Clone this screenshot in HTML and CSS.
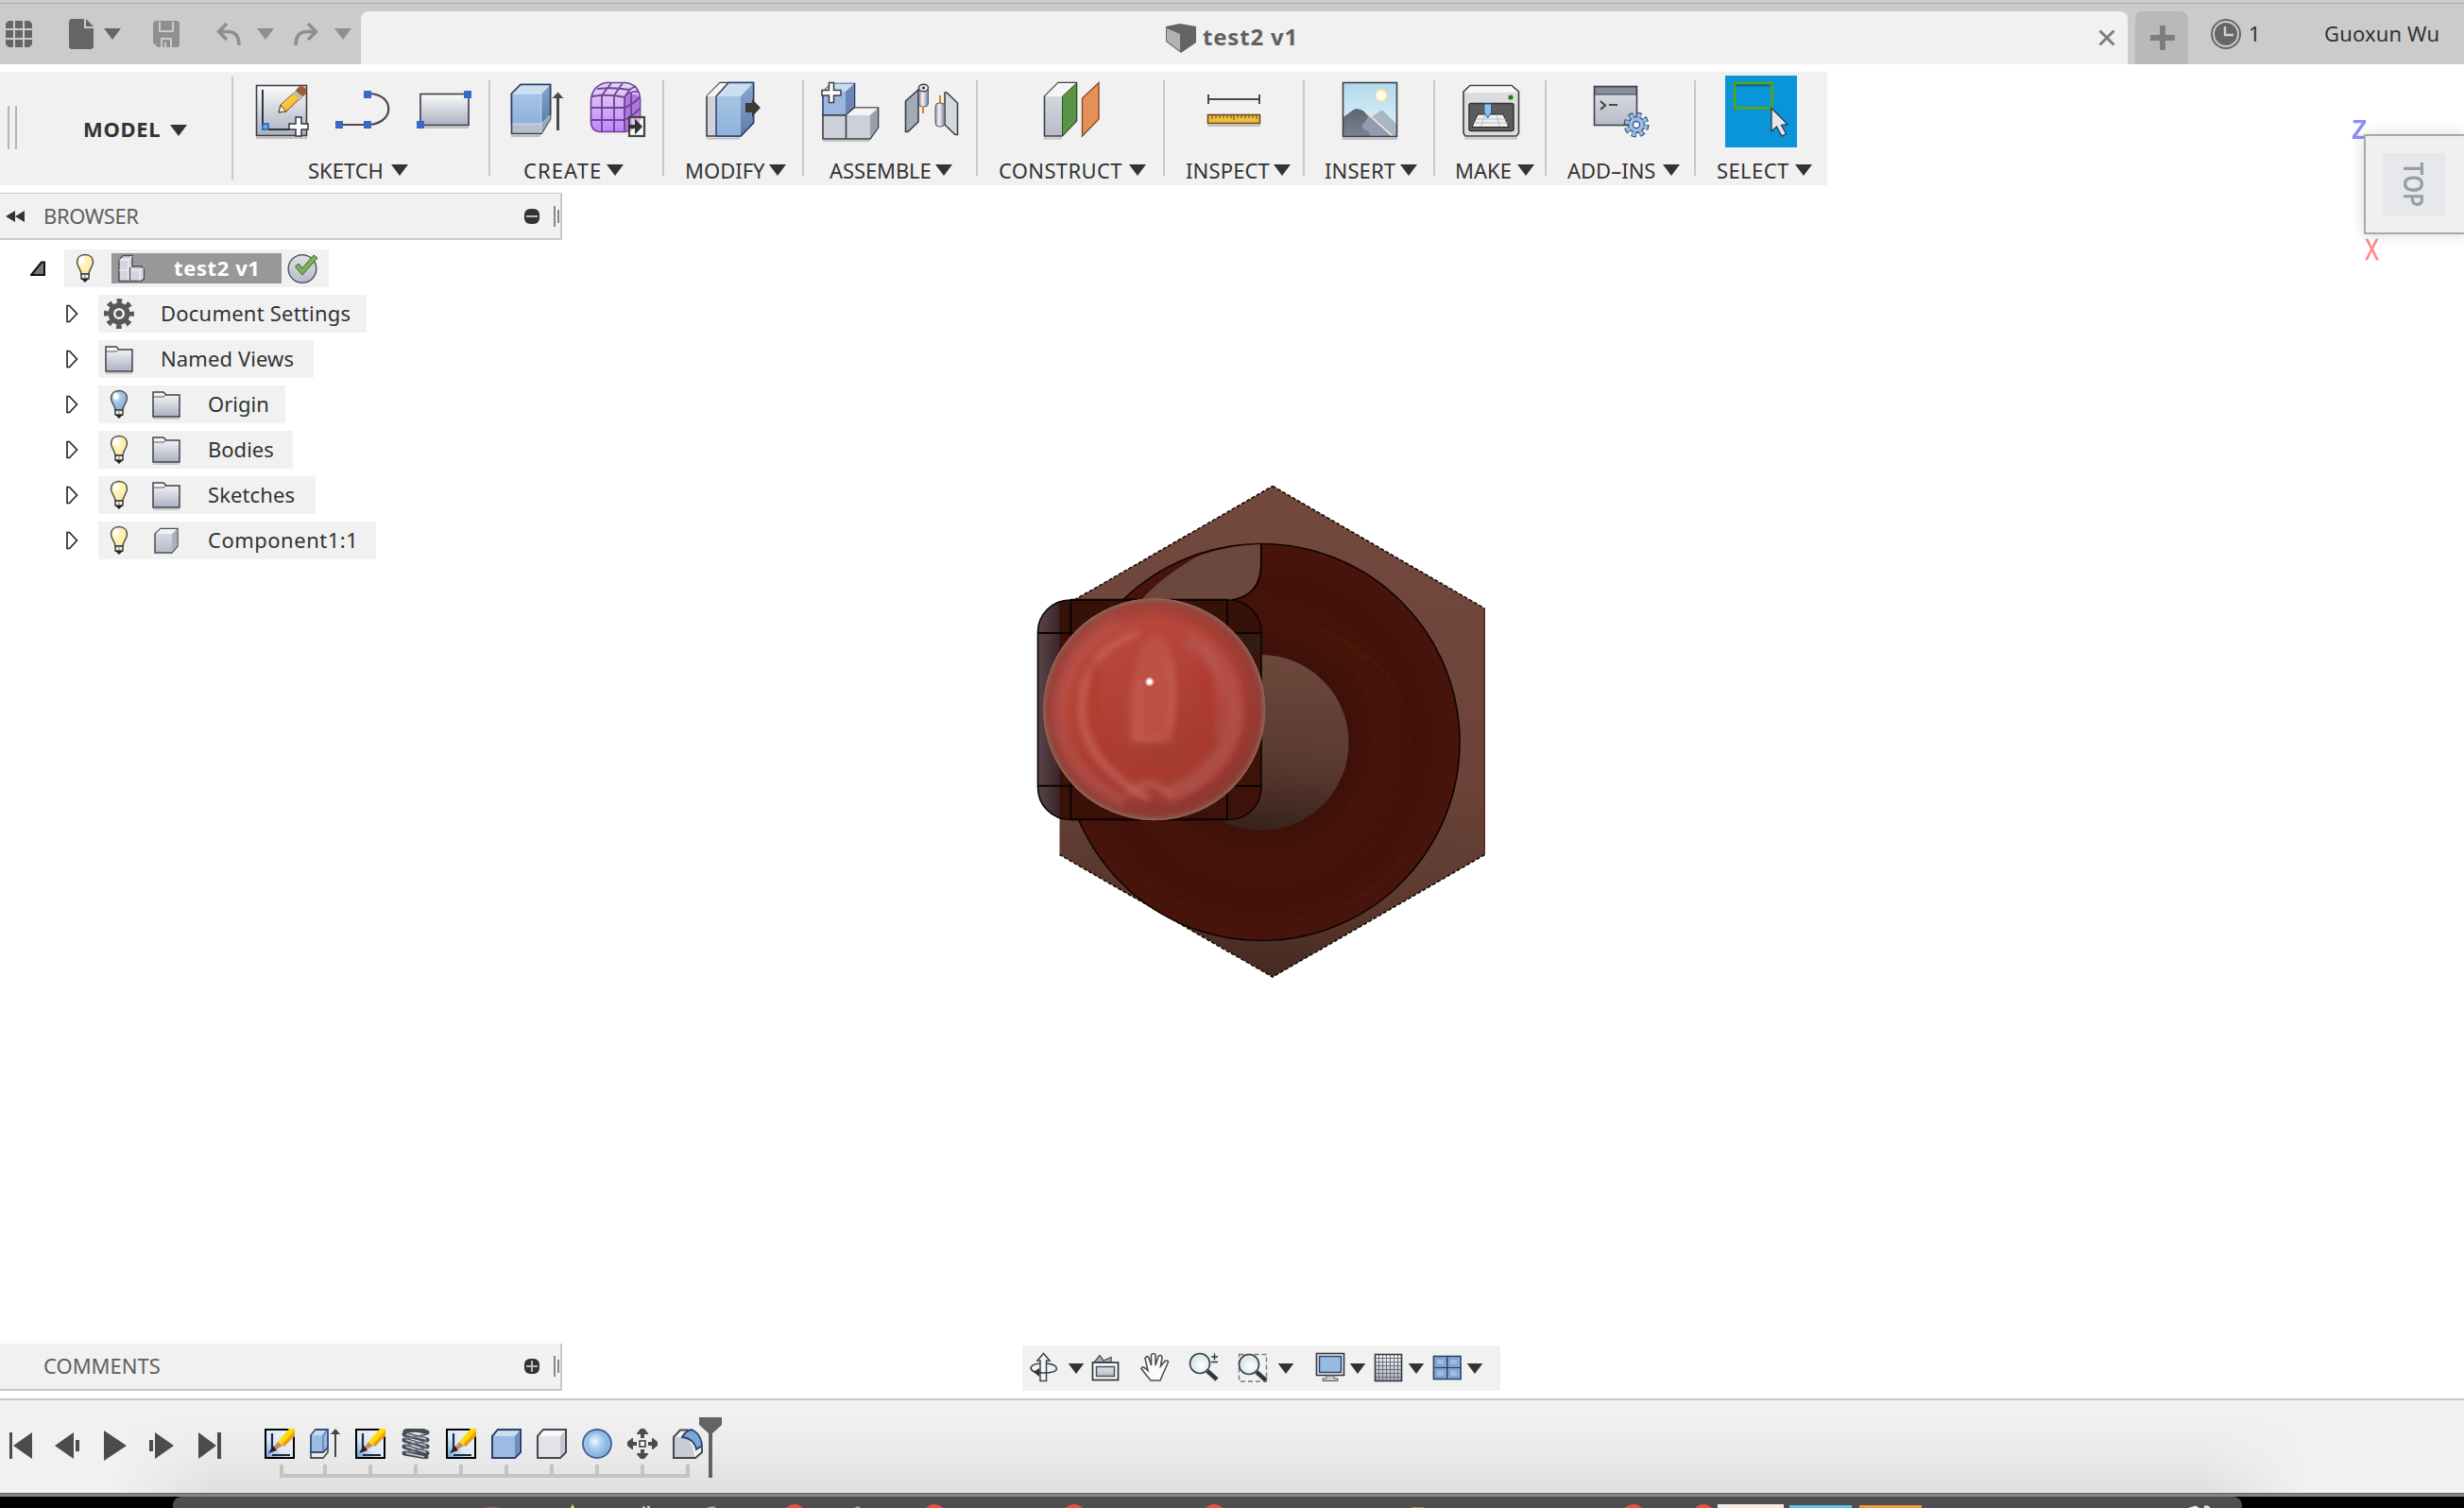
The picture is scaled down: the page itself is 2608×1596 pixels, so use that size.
FILE: index.html
```html
<!DOCTYPE html>
<html lang="en">
<head>
<meta charset="utf-8">
<title>test2 v1</title>
<link rel="stylesheet" href="styles.css">
</head>
<body>
<svg class="defs" width="0" height="0" aria-hidden="true">
  <defs>
    <linearGradient id="steel" x1="0" y1="0" x2="0" y2="1"><stop offset="0" stop-color="#fbfbfc"/><stop offset="1" stop-color="#a9b0c1"/></linearGradient>
    <linearGradient id="steelSoft" x1="0" y1="0" x2="0" y2="1"><stop offset="0" stop-color="#dfe1e4"/><stop offset="1" stop-color="#b7bbc9"/></linearGradient>
    <linearGradient id="blue" x1="0" y1="0" x2="0" y2="1"><stop offset="0" stop-color="#a6c4e4"/><stop offset="1" stop-color="#8eb2dc"/></linearGradient>
    <linearGradient id="blueSide" x1="0" y1="0" x2="0" y2="1"><stop offset="0" stop-color="#88a6cd"/><stop offset="1" stop-color="#5c7cac"/></linearGradient>
    <linearGradient id="purple" x1="0" y1="0" x2="0" y2="1"><stop offset="0" stop-color="#e6d8f2"/><stop offset="1" stop-color="#c184fb"/></linearGradient>
    <linearGradient id="pencilBody" x1="0" y1="0" x2="1" y2="1"><stop offset="0" stop-color="#fff07a"/><stop offset="1" stop-color="#f39a00"/></linearGradient>
    <linearGradient id="paper" x1="1" y1="0" x2="0" y2="1"><stop offset="0" stop-color="#f4f8fd"/><stop offset=".6" stop-color="#dce8f5"/><stop offset="1" stop-color="#5f9fe0"/></linearGradient>
    <linearGradient id="pipe" x1="0" y1="0" x2="1" y2="0"><stop offset="0" stop-color="#8d949f"/><stop offset=".4" stop-color="#f4f5f7"/><stop offset="1" stop-color="#7b828e"/></linearGradient>
    <linearGradient id="sky" x1="0" y1="0" x2="0" y2="1"><stop offset="0" stop-color="#b3d9ec"/><stop offset="1" stop-color="#e3f3fa"/></linearGradient>
    <linearGradient id="hill" x1="0" y1="0" x2="0" y2="1"><stop offset="0" stop-color="#5c6373"/><stop offset="1" stop-color="#7b8292"/></linearGradient>
    <radialGradient id="lens" cx=".6" cy=".6" r=".6"><stop offset="0" stop-color="#fff"/><stop offset="1" stop-color="#cfe5e4"/></radialGradient>
    <radialGradient id="ball" cx=".42" cy=".42" r=".6"><stop offset="0" stop-color="#f2f9ff"/><stop offset=".45" stop-color="#a5cbf0"/><stop offset="1" stop-color="#86b0e2"/></radialGradient>
    <radialGradient id="bulbOn" cx=".35" cy=".3" r=".7"><stop offset="0" stop-color="#fff"/><stop offset=".4" stop-color="#fff3b8"/><stop offset="1" stop-color="#fbe9a0"/></radialGradient>
    <radialGradient id="bulbOff" cx=".35" cy=".3" r=".7"><stop offset="0" stop-color="#fff"/><stop offset=".4" stop-color="#a4c8ec"/><stop offset="1" stop-color="#86b0de"/></radialGradient>
  </defs>
  <symbol id="tri" viewBox="0 0 18 12"><path d="M0 0H18L9 12Z" fill="currentColor"/></symbol>
  <symbol id="tree-arrow" viewBox="0 0 14 20"><path d="M2 1.500H4.500L12.500 10L4.500 18.500H2Z" fill="#fff" stroke="#222" stroke-width="1.600"/></symbol>
  <symbol id="folder" viewBox="0 0 32 32"><path d="M2 3H13L16 6H30V29H2Z" fill="url(#steel)" stroke="#3f4249" stroke-width="1.500"/><path d="M2 8H13L16 6" fill="none" stroke="#5b5f68"/><path d="M2 31H30" stroke="#000" stroke-opacity=".15" stroke-width="2"/></symbol>
  <symbol id="bulb-shape" viewBox="0 0 20 32"><path d="M10 1.500C4.500 1.500 1.500 5 1.500 9.500C1.500 14 5.500 16 6 22H14C14.500 16 18.500 14 18.500 9.500C18.500 5 15.500 1.500 10 1.500Z" stroke="#54514a" stroke-width="1.500"/><path d="M6 22H14V27H6Z" fill="#f2f2f2" stroke="#333" stroke-width="1.400"/><path d="M10 22V27" stroke="#777"/><path d="M6 27H14L10 31Z" fill="#222"/><ellipse cx="6.500" cy="7.500" rx="2.500" ry="3.500" fill="#fff"/></symbol>
  <symbol id="sketch-small" viewBox="0 0 32 32"><rect x="1" y="1" width="30" height="30" fill="url(#paper)" stroke="#000" stroke-width="2"/><path d="M8 5V23M8 28H27" fill="none" stroke="#1c2b3e" stroke-width="2.200"/><path d="M5 25L14 14L19 18L8 25Z" fill="#c98a5a"/><path d="M4 26L9 18L13 23Z" fill="#2e2018"/><path d="M14 14L26 0H32V5L20 18Z" fill="#ffdc00"/><path d="M18 17L32 2V8L21 19Z" fill="#f09a1c"/></symbol>
</svg>

<div class="window">
  <header class="titlebar">
    <div class="quick">
      <svg class="q-grid" width="28" height="28" viewBox="0 0 28 28" fill="#666"><path d="M3 0H8V8H0V3ZM10 0H18V8H10ZM20 0H25L28 3V8H20ZM0 10H8V18H0ZM10 10H18V18H10ZM20 10H28V18H20ZM0 20H8V28H3L0 25ZM10 20H18V28H10ZM20 20H28V25L25 28H20Z"/></svg>
      <svg class="q-file" width="26" height="32" viewBox="0 0 26 32" fill="#666"><path d="M2 0H16V10H26V30L24 32H2L0 30V2ZM18 0L26 8H18Z"/></svg>
      <svg class="tri q-t1" ><use href="#tri"/></svg>
      <svg class="q-save" width="28" height="28" viewBox="0 0 28 28"><path d="M2 0H26L28 2V26L26 28H5L0 23V2Z" fill="#8f8f8f"/><path d="M7 1V11H21V1M9 28V19H19V28M13 28V23" fill="none" stroke="#cbcbcb" stroke-width="2"/></svg>
      <svg class="q-undo" width="26" height="26" viewBox="0 0 26 26" fill="none" stroke="#8f8f8f" stroke-width="3.600"><path d="M11 2L2.500 10.500L11 19M3 10.500H12C20 10.500 24 15 24 25"/></svg>
      <svg class="tri q-t2"><use href="#tri"/></svg>
      <svg class="q-redo" width="26" height="26" viewBox="0 0 26 26" fill="none" stroke="#8f8f8f" stroke-width="3.600"><path d="M15 2L23.500 10.500L15 19M23 10.500H14C6 10.500 2 15 2 25"/></svg>
      <svg class="tri q-t3"><use href="#tri"/></svg>
    </div>
    <div class="tab">
      <svg width="32" height="31" viewBox="0 0 32 31"><path d="M0 3L15 0L32 3V20L16 31L0 19Z" fill="#646464"/><path d="M1 5L15 11V29L1 18.500Z" fill="#b1b3b3"/></svg>
      <span class="tab-name">test2 v1</span>
      <svg class="tab-close" width="18" height="18" viewBox="0 0 18 18"><path d="M1.500 1.500L16.500 16.500M16.500 1.500L1.500 16.500" stroke="#7f7f7f" stroke-width="3"/></svg>
    </div>
    <div class="new-tab"><svg width="26" height="26" viewBox="0 0 26 26"><path d="M13 0V26M0 13H26" stroke="#7d7d7d" stroke-width="6"/></svg></div>
    <div class="jobs"><svg width="32" height="32" viewBox="0 0 32 32"><circle cx="16" cy="16" r="15" fill="none" stroke="#666" stroke-width="2"/><circle cx="16" cy="16" r="12" fill="#666"/><path d="M15 8V17H24" fill="none" stroke="#d2d2d2" stroke-width="2.400"/></svg><span>1</span></div>
    <div class="user">Guoxun Wu</div>
  </header>

  <main class="workspace">
    <nav class="toolbar">
      <div class="model-menu"><i class="grip"></i><b>MODEL</b><svg class="tri"><use href="#tri"/></svg></div>

      <div class="group g-sketch">
        <div class="icons">
          <svg viewBox="258 80 76 76"><rect x="271.500" y="90.500" width="53" height="53" fill="url(#steel)" stroke="#3c3e44" stroke-width="1.600"/><path d="M271 146H325" stroke="#000" stroke-opacity=".2" stroke-width="2"/><path d="M278 95V133M284 137H306" stroke="#33363c" stroke-width="2"/><rect x="278" y="131" width="6" height="6" fill="#68a7f2" stroke="#1f5aa8" stroke-width="1.500"/><path d="M295 119L297 111L318 92L324 98L303 118Z" fill="url(#pencilBody)" stroke="#7b5417"/><path d="M295 119L297 111L303 118Z" fill="#f7ead2" stroke="#4a3a22"/><path d="M312 97L316 92Q320 89 324 94Q326 98 321 102Z" fill="#9a5f36"/><path d="M310 99L313 96L321 103L318 106Z" fill="#bbb"/><path d="M313 124H319V131H326V137H319V144H313V137H306V131H313Z" fill="#fff" stroke="#33363c" stroke-width="1.500"/></svg>
          <svg viewBox="344 80 76 76"><path d="M359 132H391C418 130 418 100 391 99" fill="none" stroke="#4a4a4a" stroke-width="2.200"/><g fill="#3769c9"><rect x="355" y="128" width="8" height="8"/><rect x="385" y="128" width="8" height="8"/><rect x="385" y="96" width="8" height="8"/></g></svg>
          <svg viewBox="430 80 76 76"><rect x="445" y="99.500" width="51" height="33" fill="url(#steel)" stroke="#44464b" stroke-width="1.700"/><path d="M445 135H496" stroke="#000" stroke-opacity=".18" stroke-width="2"/><g fill="#3769c9"><rect x="441" y="128" width="8" height="8"/><rect x="491" y="96" width="8" height="8"/></g></svg>
        </div>
        <div class="label"><span>SKETCH</span><svg class="tri"><use href="#tri"/></svg></div>
      </div>

      <div class="group g-create">
        <div class="icons">
          <svg viewBox="529 80 76 76"><path d="M541.500 99L551 89.500H582.500V126L573 141.500H541.500Z" fill="#b8bfcc" stroke="#3f434b" stroke-width="1.600"/><path d="M541.500 99H573V131H541.500Z" fill="url(#blue)"/><path d="M541.500 99L551 89.500H582.500L573 99Z" fill="#cadef0"/><path d="M573 99L582.500 89.500V122L573 131Z" fill="url(#blueSide)"/><path d="M573 131L582.500 122V126L573 141Z" fill="#9aa5b0"/><path d="M542 131H573L582 122M573 131V141M542 99H573V131M573 99L582 90" fill="none" stroke="#fff" stroke-opacity=".5"/><path d="M541.500 131V99L551 89.500H582.500V122" fill="none" stroke="#2b416b" stroke-width="1.600"/><path d="M541 144H572" stroke="#000" stroke-opacity=".2" stroke-width="2"/><path d="M590.500 138V102" stroke="#4a4a4a" stroke-width="3"/><path d="M584.500 104L590.500 97.500L596.500 104Z" fill="#4a4a4a"/></svg>
          <svg viewBox="615 80 76 76"><path d="M625.500 106Q627 90 642 87.500H662Q676 89 677.500 104V126Q672 138 662 139.500H634Q625.500 138 625.500 129Z" fill="url(#purple)" stroke="#6c4699" stroke-width="1.700"/><path d="M661 103Q674 96 677 104V126Q670 137 661 139Z" fill="#b077e0"/><path d="M627 102Q644 99 661 103Q666 96 676 97M632 94Q650 92 666 95L673 91M626 114H661Q668 112 677 103M626 127H661Q668 124 677 115M637 139V101L647 88M650 139V101L659 88M661 139V103L667 94M668 136V98" fill="none" stroke="#6f459c" stroke-width="1.900"/><rect x="666" y="124" width="16" height="20" fill="#fff" fill-opacity=".6" stroke="#444" stroke-width="2.200"/><path d="M665 132H672V125.500L680 134L672 142.500V136H665Z" fill="#333"/></svg>
        </div>
        <div class="label"><span>CREATE</span><svg class="tri"><use href="#tri"/></svg></div>
      </div>

      <div class="group g-modify">
        <div class="icons">
          <svg viewBox="738 80 76 76"><path d="M748 102L762 87.500H797.500V130L784 144H748Z" fill="#d0d3da" stroke="#3c3f46" stroke-width="1.600"/><path d="M748 102L762 88H771L758 102Z" fill="#f5f5f6"/><path d="M758 102H784V144H758Z" fill="url(#blue)"/><path d="M758 102L771 88H797L784 102Z" fill="#cadef0"/><path d="M784 102L797 88V130L784 144Z" fill="url(#blueSide)"/><path d="M758 144V102L771 87.500H797.500V130L784 144Z" fill="none" stroke="#2b416b" stroke-width="1.500"/><path d="M748 146.500H783" stroke="#000" stroke-opacity=".2" stroke-width="2"/><path d="M789 109H796V105L805 114L796 123.500V119H789Z" fill="#3a3a3a"/></svg>
        </div>
        <div class="label"><span>MODIFY</span><svg class="tri"><use href="#tri"/></svg></div>
      </div>

      <div class="group g-assemble">
        <div class="icons">
          <svg viewBox="861 80 76 76"><path d="M871 97L880 88.500H904.500V113L895 122H871Z" fill="#9cb7df" stroke="#2b416b" stroke-width="1.600"/><path d="M880 88.500H904L895 97H871Z" fill="#c9ddf0"/><path d="M895 97L904 89V113L895 122Z" fill="#6d86b5"/><path d="M871 122H895L904 114H929.500V135L921 147H871Z" fill="#cdd0d8" stroke="#3c3f46" stroke-width="1.600"/><path d="M896 122L905 114.500H929L921 122Z" fill="#f4f4f5"/><path d="M921 122L929 115V135L921 146Z" fill="#97a1ae"/><path d="M895.500 122V147" stroke="#3c3f46" stroke-width="1.600"/><path d="M871 149H920" stroke="#000" stroke-opacity=".18" stroke-width="2"/><path d="M877.500 87.500H882.500V95.500H890V101H882.500V108.500H877.500V101H870V95.500H877.500Z" fill="#fff" stroke="#3c3f46" stroke-width="1.500"/></svg>
          <svg viewBox="947 80 76 76"><path d="M958.500 107L972 95V129L961 139.500H958.500Z" fill="#a3abb6" stroke="#3c3f46" stroke-width="1.600"/><rect x="972.500" y="90" width="10" height="23" rx="4" fill="url(#pipe)" stroke="#555b66"/><ellipse cx="977.500" cy="93" rx="5" ry="3.800" fill="#e8eaed" stroke="#3c3f46" stroke-width="1.400"/><circle cx="977.500" cy="93" r="1.500" fill="#333"/><path d="M977 113.500V120M995 101V112" stroke="#f07800" stroke-width="2"/><path d="M1000 98H1002L1013.500 109V142.500H1011L1000 132Z" fill="#d5d8df" stroke="#3c3f46" stroke-width="1.600"/><rect x="990" y="109" width="10" height="25" rx="4" fill="url(#pipe)" stroke="#555b66"/></svg>
        </div>
        <div class="label"><span>ASSEMBLE</span><svg class="tri"><use href="#tri"/></svg></div>
      </div>

      <div class="group g-construct">
        <div class="icons">
          <svg viewBox="1095 80 76 76"><path d="M1105.500 102L1120 87.500H1139.500V128L1124 144H1105.500Z" fill="url(#steelSoft)" stroke="#3c3f46" stroke-width="1.600"/><path d="M1106 102L1120 88H1139L1124 102Z" fill="#f5f5f6"/><path d="M1124.500 102L1139.500 88V128L1124.500 144Z" fill="#5a9445" stroke="#2c5220"/><path d="M1145.500 104L1163 87.500V126L1145.500 144Z" fill="#e39158" stroke="#8b4a22" stroke-width="1.400"/><path d="M1105 146.500H1124" stroke="#000" stroke-opacity=".2" stroke-width="2"/></svg>
        </div>
        <div class="label"><span>CONSTRUCT</span><svg class="tri"><use href="#tri"/></svg></div>
      </div>

      <div class="group g-inspect">
        <div class="icons">
          <svg viewBox="1268 80 76 76"><path d="M1279 100V110M1333 100V110M1279 105H1333" stroke="#484848" stroke-width="2"/><rect x="1278.500" y="121.500" width="55" height="9" fill="#e9c03b" stroke="#6d4022" stroke-width="1.500"/><path d="M1283 122v4M1287 122v3M1291 122v3M1295 122v3M1299 122v3M1303 122v3M1306 122v5M1310 122v3M1314 122v3M1318 122v3M1322 122v3M1326 122v3M1330 122v4" stroke="#6d4022"/><path d="M1278 133H1334" stroke="#000" stroke-opacity=".2" stroke-width="2"/></svg>
        </div>
        <div class="label"><span>INSPECT</span><svg class="tri"><use href="#tri"/></svg></div>
      </div>

      <div class="group g-insert">
        <div class="icons">
          <svg viewBox="1411 80 76 76"><rect x="1421.500" y="87.500" width="57" height="57" fill="url(#sky)"/><circle cx="1462" cy="101" r="6" fill="#fffce8" stroke="#f8e19a" stroke-width="1.500"/><path d="M1449 126L1460 118Q1463 115 1466 119L1478 131V144H1455Z" fill="#a9b7c5"/><path d="M1422 124L1433 116Q1438 114 1444 118L1472 144H1422Z" fill="#939caf"/><path d="M1422 124L1433 116Q1438 114 1444 118L1448 124Q1445 129 1442 132Q1441 136 1446 138Q1451 141 1450 144H1422Z" fill="url(#hill)"/><path d="M1444 117L1474 144" stroke="#f7ecd0" stroke-width="1.500"/><rect x="1421.500" y="87.500" width="57" height="57" fill="none" stroke="#3b4049" stroke-width="1.600"/><path d="M1421 147H1479" stroke="#000" stroke-opacity=".2" stroke-width="2"/></svg>
        </div>
        <div class="label"><span>INSERT</span><svg class="tri"><use href="#tri"/></svg></div>
      </div>

      <div class="group g-make">
        <div class="icons">
          <svg viewBox="1539 80 76 76"><path d="M1549 97L1556 90.500H1600L1607.500 97V141L1605 144H1551L1549 141Z" fill="#dcdcdc" stroke="#3c3f46" stroke-width="1.600"/><path d="M1550 98L1556 91.500H1600L1606.500 98Z" fill="#f7f7f7"/><circle cx="1599" cy="103" r="2.600" fill="#17801b"/><rect x="1555" y="109.500" width="47" height="29" rx="2" fill="#5c5c5c" stroke="#333" stroke-width="1.500"/><path d="M1564 121H1591L1597 134.500H1558Z" fill="#f0f0f0" stroke="#222"/><path d="M1562 126H1594M1560 130H1596M1571 121L1568 134M1584 121L1587 134" stroke="#bbb"/><path d="M1571 110H1578.500V119L1574.500 125L1571 119Z" fill="#8ec0e8" stroke="#2a5a95"/><path d="M1550 146.500H1606" stroke="#000" stroke-opacity=".2" stroke-width="2"/></svg>
        </div>
        <div class="label"><span>MAKE</span><svg class="tri"><use href="#tri"/></svg></div>
      </div>

      <div class="group g-addins">
        <div class="icons">
          <svg viewBox="1677 80 76 76"><rect x="1687.500" y="91.500" width="45" height="41" fill="url(#steelSoft)" stroke="#3c4350" stroke-width="1.600"/><rect x="1688" y="92" width="44" height="8" fill="#868e9b" stroke="#3c4350"/><path d="M1694 107L1699 111.500L1694 116M1703 111H1712" fill="none" stroke="#484848" stroke-width="2.200"/><circle cx="1732" cy="132" r="10.500" fill="none" stroke="#35517c" stroke-width="6" stroke-dasharray="4.800 3.447"/><circle cx="1732" cy="132" r="8.500" fill="#9dbfe6" stroke="#35517c" stroke-width="1.400"/><circle cx="1732" cy="132" r="10" fill="none" stroke="#9dbfe6" stroke-width="4.500" stroke-dasharray="3.400 4.454" stroke-dashoffset="-.7"/><circle cx="1732" cy="132" r="3.500" fill="#fff" stroke="#35517c" stroke-width="1.300"/></svg>
        </div>
        <div class="label"><span>ADD–INS</span><svg class="tri"><use href="#tri"/></svg></div>
      </div>

      <div class="group g-select">
        <div class="icons">
          <svg class="active" viewBox="1826 80 76 76"><path d="M1837 90H1874" stroke="#056a9e" stroke-width="3"/><rect x="1836" y="88" width="39.500" height="26.500" fill="none" stroke="#5aa410" stroke-width="2.600"/><path d="M1875 114.500V139L1880.500 134L1886 144L1890.500 141.500L1885.500 132.500L1892 131.500Z" fill="#e5e6ec" stroke="#2b3c4c" stroke-width="1.300"/></svg>
        </div>
        <div class="label"><span>SELECT</span><svg class="tri"><use href="#tri"/></svg></div>
      </div>
    </nav>

    <section class="panel browser">
      <svg class="collapse" width="20" height="12" viewBox="0 0 20 12" fill="#333"><path d="M10 0V12L0 6ZM20 0V12L10 6Z"/></svg>
      <h2>BROWSER</h2>
      <svg class="toggle" width="16" height="16" viewBox="0 0 16 16"><rect width="16" height="16" rx="6" fill="#333"/><path d="M2 8H14" stroke="#bbb" stroke-width="2"/></svg>
      <i class="pgrip"></i>
    </section>

    <ul class="tree">
      <li class="root">
        <svg class="open" width="16" height="16" viewBox="0 0 16 16"><path d="M1 15L12 1.500H15V15Z" fill="#777" stroke="#111" stroke-width="2"/></svg>
        <div class="node">
          <svg class="bulb" fill="url(#bulbOn)"><use href="#bulb-shape"/></svg>
          <div class="selected">
            <svg width="30" height="30" viewBox="0 0 30 30"><path d="M2 6L6 1.500H16V13H25.500L28.500 16V26L25.500 28.500H2Z" fill="#d2d5dc" stroke="#4b4f57" stroke-width="1.400"/><path d="M2 6H12L16 2M12 6V28M2 17H12M14 17H24L28 15M24 17V28" fill="none" stroke="#f8f8f8"/><path d="M13.500 14V28" stroke="#4b4f57" stroke-width="1.200"/></svg>
            <b>test2 v1</b>
          </div>
          <svg class="check" width="34" height="34" viewBox="0 0 34 34"><circle cx="16" cy="17.500" r="14.800" fill="url(#steelSoft)" stroke="#555a66" stroke-width="1.500"/><path d="M8.500 15L12 12L16 17L28 3L32 6L16 24Z" fill="#7cb454" stroke="#3e5f2a"/></svg>
        </div>
      </li>
      <li><svg class="arrow"><use href="#tree-arrow"/></svg><div class="node n1"><svg width="32" height="32" viewBox="0 0 32 32"><circle cx="16" cy="16" r="13.500" fill="none" stroke="#585858" stroke-width="5" stroke-dasharray="5.400 5.203" stroke-dashoffset="2.700"/><circle cx="16" cy="16" r="8.800" fill="none" stroke="#585858" stroke-width="5.500"/><circle cx="16" cy="16" r="3.500" fill="#585858"/></svg><span>Document Settings</span></div></li>
      <li><svg class="arrow"><use href="#tree-arrow"/></svg><div class="node n2"><svg width="32" height="32"><use href="#folder"/></svg><span>Named Views</span></div></li>
      <li><svg class="arrow"><use href="#tree-arrow"/></svg><div class="node n3"><svg class="bulb" fill="url(#bulbOff)"><use href="#bulb-shape"/></svg><svg width="32" height="32"><use href="#folder"/></svg><span>Origin</span></div></li>
      <li><svg class="arrow"><use href="#tree-arrow"/></svg><div class="node n4"><svg class="bulb" fill="url(#bulbOn)"><use href="#bulb-shape"/></svg><svg width="32" height="32"><use href="#folder"/></svg><span>Bodies</span></div></li>
      <li><svg class="arrow"><use href="#tree-arrow"/></svg><div class="node n5"><svg class="bulb" fill="url(#bulbOn)"><use href="#bulb-shape"/></svg><svg width="32" height="32"><use href="#folder"/></svg><span>Sketches</span></div></li>
      <li><svg class="arrow"><use href="#tree-arrow"/></svg><div class="node n6"><svg class="bulb" fill="url(#bulbOn)"><use href="#bulb-shape"/></svg><svg width="32" height="32" viewBox="0 0 32 32"><path d="M4 9L10 3.500H28V22L22 29H4Z" fill="url(#steelSoft)" stroke="#4b4f57" stroke-width="1.500"/><path d="M5 9L10 4H27L22 9Z" fill="#f2f2f4"/><path d="M22 9L27.500 4V22L22 28.500Z" fill="#aab0bd"/></svg><span>Component1:1</span></div></li>
    </ul>

    <svg class="model" viewBox="1090 500 500 550">
      <defs>
        <linearGradient id="hexFill" x1=".5" y1="0" x2=".4" y2="1"><stop offset="0" stop-color="#73493e"/><stop offset=".55" stop-color="#6b4338"/><stop offset=".8" stop-color="#5d3a30"/><stop offset="1" stop-color="#44281f"/></linearGradient>
        <linearGradient id="holeFill" x1=".6" y1="0" x2=".5" y2="1"><stop offset="0" stop-color="#6d473c"/><stop offset=".6" stop-color="#5a3a30"/><stop offset="1" stop-color="#38221b"/></linearGradient>
        <linearGradient id="ballBase" x1=".2" y1="0" x2=".7" y2="1"><stop offset="0" stop-color="#bd4b40"/><stop offset=".5" stop-color="#b04035"/><stop offset="1" stop-color="#96382f"/></linearGradient>
        <radialGradient id="ballEdge"><stop offset=".8" stop-color="#6e2c2a" stop-opacity="0"/><stop offset=".94" stop-color="#803a35" stop-opacity=".45"/><stop offset=".98" stop-color="#8c5348" stop-opacity=".9"/><stop offset="1" stop-color="#94695a"/></radialGradient>
        <linearGradient id="stripFill" x1="0" y1="0" x2="1" y2="0"><stop offset="0" stop-color="#5b454a"/><stop offset="1" stop-color="#3a272a"/></linearGradient>
        <radialGradient id="ringFill" gradientUnits="userSpaceOnUse" cx="1335" cy="785.500" r="210"><stop offset=".44" stop-color="#3d1009"/><stop offset=".6" stop-color="#461409"/><stop offset=".8" stop-color="#42110a"/><stop offset="1" stop-color="#48150c"/></radialGradient>
        <filter id="soft" x="-20%" y="-20%" width="140%" height="140%"><feGaussianBlur stdDeviation="3"/></filter>
        <clipPath id="ballClip"><circle cx="1221.700" cy="750.800" r="117.500"/></clipPath>
        <clipPath id="squareClip"><rect x="1098.500" y="635" width="236.500" height="232.500" rx="34"/></clipPath>
      </defs>
      <path d="M1347 514.500L1571.500 644V904.500L1347 1034L1121.500 904.500V644Z" fill="url(#hexFill)"/>
      <path d="M1347 514.500L1571.500 644M1571.500 904.500L1347 1034L1121.500 904.500M1121.500 644L1347 514.500" fill="none" stroke="#1c0d08" stroke-width="1.600" stroke-dasharray="4 2"/>
      <path d="M1571 644V904" stroke="#5f2d22" stroke-width="2"/>
      <circle cx="1335" cy="785.500" r="210" fill="url(#ringFill)" stroke="#100403" stroke-width="1.600"/>
      <path d="M1334.800 576Q1298 577 1267 589Q1230 610 1208 635H1304Q1334 630 1334.800 598Z" fill="#6b473d"/>
      <path d="M1334.800 576V598Q1334 630 1304 635" fill="none" stroke="#0a0201" stroke-width="1.800"/>
      <circle cx="1334.500" cy="786" r="93" fill="url(#holeFill)"/>
      <path d="M1428 705Q1464 740 1452 800Q1444 840 1414 872M1400 670Q1490 700 1492 790Q1484 860 1440 910M1205 925Q1260 975 1340 975Q1440 974 1490 900M1360 655Q1410 660 1445 700" fill="none" stroke="#5a2114" stroke-opacity=".18" stroke-width="5" filter="url(#soft)"/>
      <g clip-path="url(#squareClip)">
        <rect x="1098" y="634" width="237" height="234" fill="#3a1007"/>
        <path d="M1279 634H1335V868H1279Z" fill="#421209"/>
        <rect x="1098" y="634" width="23.500" height="234" fill="url(#stripFill)"/>
        <rect x="1290" y="672" width="45" height="20" fill="#321b10"/>
        <path d="M1335 693Q1322 693 1312 696V800L1270 852Q1300 878 1335 876Z" fill="#3d1309"/>
        <path d="M1121.500 634H1335V670H1121.500Z" fill="#351108"/>
      </g>
      <rect x="1098.500" y="635" width="236.500" height="232.500" rx="34" fill="none" stroke="#0b0505" stroke-width="1.600"/>
      <path d="M1133.400 635V867M1299 635V867M1098 670H1335M1098 831.700H1335M1133 634.700H1300M1133 867.300H1300" stroke="#0b0403" stroke-width="2"/>
      <circle cx="1221.700" cy="750.800" r="117.500" fill="url(#ballBase)"/>
      <g clip-path="url(#ballClip)" fill="none">
        <g filter="url(#soft)">
          <path d="M1205 670Q1143 690 1145 755Q1150 810 1216 845" stroke="#c96660" stroke-width="7" stroke-opacity=".75"/>
          <path d="M1182 655Q1120 690 1120 760Q1125 820 1190 850" stroke="#c25750" stroke-width="14" stroke-opacity=".7"/>
          <path d="M1255 675Q1310 700 1306 765Q1295 820 1235 842" stroke="#b4544e" stroke-width="18" stroke-opacity=".7"/>
          <path d="M1272 680Q1298 720 1290 780" stroke="#c4645e" stroke-width="4" stroke-opacity=".5"/>
          <path d="M1160 700Q1150 760 1180 805Q1220 830 1260 810Q1290 780 1272 710" stroke="#b1392d" stroke-width="12" stroke-opacity=".5"/>
          <path d="M1213 678Q1232 664 1240 690Q1250 730 1240 785H1196Q1190 720 1213 678Z" fill="#bf5448" fill-opacity=".85"/>
          <path d="M1207 720Q1204 750 1206 782M1238 700Q1244 745 1238 770M1198 783H1232" stroke="#ca6a61" stroke-width="5" stroke-opacity=".45"/>
          <path d="M1194 842Q1216 818 1238 842" stroke="#c0625a" stroke-width="8" stroke-opacity=".6"/>
        </g>
      </g>
      <circle cx="1221.700" cy="750.800" r="117.500" fill="url(#ballEdge)"/>
      <circle cx="1216.700" cy="721.600" r="4.500" fill="#e9aaa4"/><circle cx="1216.700" cy="721.600" r="2.600" fill="#fff"/>
    </svg>

    <div class="viewcube">
      <span class="axis-z">Z</span><span class="axis-x">X</span>
      <div class="face"><div class="face-in"><span>TOP</span></div></div>
    </div>

    <div class="bottom">
      <section class="panel comments">
        <h2>COMMENTS</h2>
        <svg class="toggle" width="16" height="16" viewBox="0 0 16 16"><rect width="16" height="16" rx="6" fill="#333"/><path d="M2 8H14M8 2V14" stroke="#bbb" stroke-width="2"/></svg>
        <i class="pgrip"></i>
      </section>
      <div class="navbar">
        <svg viewBox="1084 1424 40 48" width="40"><path d="M1101 1461.500V1440H1098L1104.500 1432.500L1111 1440H1107.500V1461.500Z" fill="#f6f7f9" stroke="#3c414b" stroke-width="1.500"/><path d="M1101 1443Q1091 1444 1091 1448Q1092 1453 1104 1453Q1118 1453 1118.500 1448.500Q1118 1444 1108 1443" fill="none" stroke="#3c414b" stroke-width="1.600"/><path d="M1094 1452L1100 1448V1457Z" fill="#333"/></svg>
        <svg class="tri n-a"><use href="#tri"/></svg>
        <svg viewBox="1150 1424 40 48" width="40"><path d="M1158 1442L1164 1434.500L1168 1440L1176 1436.500V1442Z" fill="#aab0b9" stroke="#4c5058" stroke-width="1.300"/><rect x="1156.500" y="1442" width="27" height="18.500" fill="#fafafb" stroke="#33363c" stroke-width="1.700"/><rect x="1160.500" y="1446.500" width="19" height="10" fill="url(#steelSoft)" stroke="#4c5058" stroke-width="1.500"/></svg>
        <svg class="n-gap" viewBox="1202 1424 40 48" width="40"><path d="M1218 1461L1213 1455L1208 1448.500Q1209 1446 1212 1448L1215 1450.500L1212 1437.500Q1214 1434 1216 1437L1218.500 1445V1434Q1221 1431 1223 1434V1445L1226 1435.500Q1229 1433 1230 1436.500L1228.500 1446L1233 1440.500Q1236 1439 1236.500 1441.500L1231 1454L1228 1461Z" fill="#fbfbfc" stroke="#4c5058" stroke-width="1.600"/></svg>
        <svg class="n-gap" viewBox="1254 1424 40 48" width="40"><circle cx="1270" cy="1443" r="10.500" fill="url(#lens)" stroke="#3c414b" stroke-width="1.600"/><path d="M1278 1451L1288 1460" stroke="#33363c" stroke-width="4.500"/><path d="M1282 1436H1289M1285.500 1432.500V1439.500M1282 1441.500H1289" stroke="#33363c" stroke-width="1.400"/></svg>
        <svg class="n-gap" viewBox="1306 1424 40 48" width="40"><rect x="1311.500" y="1433.500" width="29" height="28.500" fill="none" stroke="#777" stroke-width="1.400" stroke-dasharray="5 3"/><circle cx="1322" cy="1444" r="10.500" fill="url(#lens)" stroke="#3c414b" stroke-width="1.600"/><path d="M1330 1452L1340 1461" stroke="#33363c" stroke-width="4.500"/></svg>
        <svg class="tri n-b"><use href="#tri"/></svg>
        <svg viewBox="1386 1424 40 48" width="40"><rect x="1393.500" y="1432.500" width="29" height="23" fill="#f4f5f7" stroke="#33363c" stroke-width="1.600"/><rect x="1396.500" y="1435.500" width="23" height="17" fill="#98bbe2" stroke="#2b416b" stroke-width="1.500"/><path d="M1404 1456H1412V1459H1416V1461.500H1400V1459H1404Z" fill="#c9ccd3" stroke="#555a66"/></svg>
        <svg class="tri n-c"><use href="#tri"/></svg>
        <svg viewBox="1450 1424 38 48" width="38"><rect x="1455.500" y="1433.500" width="28" height="28" fill="url(#steel)" stroke="#33363c" stroke-width="1.600"/><path d="M1459.500 1434v27M1463.500 1434v27M1467.500 1434v27M1471.500 1434v27M1475.500 1434v27M1479.500 1434v27M1456 1437.500h27M1456 1441.500h27M1456 1445.500h27M1456 1449.500h27M1456 1453.500h27M1456 1457.500h27" stroke="#6b6f78"/></svg>
        <svg class="tri n-d"><use href="#tri"/></svg>
        <svg viewBox="1512 1424 38 48" width="38"><rect x="1517.500" y="1435.500" width="28.500" height="24" fill="#9dbde2" stroke="#2b416b" stroke-width="1.700"/><path d="M1531.700 1435V1460M1517 1447.500H1546" stroke="#2b416b" stroke-width="1.700"/><path d="M1520 1438h9v7h-9zM1534 1438h9v7h-9zM1520 1450h9v7h-9zM1534 1450h9v7h-9z" fill="none" stroke="#6a8cbc"/></svg>
        <svg class="tri n-e"><use href="#tri"/></svg>
      </div>
    </div>
  </main>

  <footer class="timeline">
    <svg class="play" viewBox="0 1500 240 64" width="240" height="64" fill="#4c4c4c"><path d="M10 1516H13V1544H10ZM34 1516V1544L14 1530ZM58 1530L78 1516V1544ZM80 1524H84V1536H80ZM110 1514L134 1530L110 1546ZM158 1524H162V1536H158ZM164 1516L184 1530L164 1544ZM210 1516L229 1530L210 1544ZM230 1516H234V1544H230Z"/></svg>
    <div class="history">
      <div class="features">
        <svg><use href="#sketch-small"/></svg>
        <svg viewBox="0 0 32 32"><path d="M1 24V31H14L19 25V19" fill="#e8eaed" stroke="#555" stroke-width="1.800"/><path d="M1 7L6 1H19V20L14 25H1Z" fill="#9cbce2" stroke="#2f4d80" stroke-width="1.800"/><path d="M2 7L6 2H18L14 7Z" fill="#c7dbf0"/><path d="M14 7V24M14 7L18 2" stroke="#5576a6" stroke-width="1.300"/><path d="M27 30V4" stroke="#444" stroke-width="2"/><path d="M22 6L27 0L32 6Z" fill="#444"/></svg>
        <svg><use href="#sketch-small"/></svg>
        <svg viewBox="0 0 32 32" fill="none"><path d="M5 3Q16 -1 28 4M4 6L28 12M4 12L28 19M4 19L28 26M4 26L27 30" stroke="#454a55" stroke-width="5" stroke-linecap="round"/><path d="M6 6L27 11M6 12L27 18M6 19L27 25M6 26L25 30" stroke="#c9cdd6" stroke-width="1.700"/><path d="M28 6L4 11M28 13L4 18M28 20L4 25" stroke="#6c717d" stroke-width="2"/></svg>
        <svg><use href="#sketch-small"/></svg>
        <svg viewBox="0 0 32 32"><path d="M1 8L7 1H31V25L25 31H1Z" fill="#9bbbe2" stroke="#2b416b" stroke-width="2"/><path d="M2.500 8L7 2.500H29.500L25 8Z" fill="#cadef0"/><path d="M25 8L29.500 3V24L25 29.500Z" fill="#6c8dbd"/></svg>
        <svg viewBox="0 0 32 32"><path d="M1 8L7 1H31V25L25 31H1Z" fill="#e2e3e8" stroke="#44474e" stroke-width="2"/><path d="M2.500 8L7 2.500H29.500L25 8Z" fill="#fafafa"/><path d="M25 8L29.500 3V24L25 29.500Z" fill="#c3c7cf"/></svg>
        <svg viewBox="0 0 32 32"><circle cx="16" cy="16" r="15" fill="url(#ball)" stroke="#3f5f94" stroke-width="1.800"/><ellipse cx="16" cy="16" rx="10" ry="12" fill="none" stroke="#7fa8dc" stroke-opacity=".5" stroke-width="1.500"/></svg>
        <svg viewBox="0 0 32 32"><path d="M14 0H18L22 5V6H18V10H14V6H10V5ZM14 32H18L22 27V26H18V22H14V26H10V27ZM0 14V18L5 22H6V18H10V14H6V10H5ZM32 14V18L27 22H26V18H22V14H26V10H27Z" fill="#4c4c4c"/><rect x="13" y="13" width="6" height="6" fill="#fff" stroke="#444" stroke-width="1.600"/></svg>
        <svg viewBox="0 0 32 32"><path d="M1 9L8 1.500H16L31 20V25L24 31H1Z" fill="#f2f2f4" stroke="#44474e" stroke-width="2"/><path d="M2 9H10Q22 12 23 30H2Z" fill="#c9ccd5"/><path d="M10 9Q14 2 20 1Q30 5 31 18L25 22Q23 11 10 9Z" fill="#7ea6d6" stroke="#2b416b" stroke-width="1.800"/></svg>
      </div>
      <svg class="rail" viewBox="280 1550 464 14" width="464" height="14" fill="#c3c3c3"><path d="M296 1550h4v10h42v-10h4v10h44v-10h4v10h44v-10h4v10h44v-10h4v10h44v-10h4v10h44v-10h4v10h44v-10h4v10h44v-10h4v10h44v-10h4v14H296Z"/></svg>
      <svg class="marker" width="24" height="64" viewBox="0 0 24 64"><path d="M0 0H24V8L14 17V64H10V17L0 8Z" fill="#636363"/></svg>
    </div>
  </footer>

  <svg class="dock" viewBox="0 1584 2608 12" width="2608" height="12">
    <rect x="0" y="1584" width="2608" height="12" fill="#000"/>
    <rect x="183" y="1584" width="2190" height="30" rx="9" fill="#4f4d4f"/>
    <g fill="#e8503f"><circle cx="841" cy="1604" r="12"/><circle cx="989" cy="1604" r="12"/><circle cx="1137" cy="1604" r="12"/><circle cx="1285" cy="1604" r="12"/><circle cx="1729" cy="1604" r="12"/><circle cx="1803" cy="1604" r="12"/><ellipse cx="521" cy="1596" rx="8" ry="1.500" fill="#a85a4c"/></g>
    <path d="M604 1596L606 1592L608 1596Z" fill="#f4e04b"/><path d="M680 1596V1594.500H683V1596M685 1596V1594H688V1596" fill="#c8c8c8"/>
    <path d="M748 1596L752 1594.500H757V1596ZM904 1596L908 1594L911 1596Z" fill="#c2ab7c"/><path d="M1491 1596L1497 1595H1507V1596Z" fill="#b08a4c"/>
    <rect x="1818" y="1592" width="70" height="4" fill="#f6ece2"/><rect x="1894" y="1593" width="66" height="3" fill="#5cc3ea"/><rect x="1968" y="1593" width="66" height="3" fill="#f29a34"/>
    <path d="M2316 1596L2324 1593.500L2328 1596ZM2333 1596V1593.500H2337L2340 1596Z" fill="#e6e6e6"/>
  </svg>
</div>
</body>
</html>
```

FILE: styles.css
```css
* { box-sizing: border-box; }
body { margin: 0; font-family: "Noto Sans", "Open Sans", sans-serif; font-size: 22px; color: #333; background: #fff; }
svg { display: block; flex: none; }
.defs { position: absolute; }
.window { width: 2608px; height: 1596px; display: flex; flex-direction: column; overflow: hidden; }
.tri { width: 18px; height: 12px; color: #333; }

/* title bar */
.titlebar { height: 68px; flex: none; display: flex; align-items: flex-end; background: linear-gradient(#cfcdd1 0 3px, #a9a8ab 3px 4px, #cbcbcb 4px); }
.quick { width: 382px; height: 56px; display: flex; align-items: flex-start; padding-left: 6px; }
.quick .q-grid { margin-top: 10px; }
.quick .q-file { margin: 8px 0 0 39px; }
.quick .q-t1 { margin: 18px 0 0 11px; color: #666; }
.quick .q-save { margin: 10px 0 0 34px; }
.quick .q-undo { margin: 11px 0 0 39px; }
.quick .q-t2 { margin: 18px 0 0 17px; color: #8f8f8f; }
.quick .q-redo { margin: 11px 0 0 21px; }
.quick .q-t3 { margin: 18px 0 0 17px; color: #8f8f8f; }
.tab { width: 1870px; height: 56px; background: #f1f1f1; border-radius: 8px 8px 0 0; display: flex; align-items: center; padding: 0 13px 0 852px; }
.tab-name { font-weight: 700; font-size: 24px; letter-spacing: .8px; line-height: 54px; height: 56px; color: #606060; margin-left: 7px; }
.tab-close { margin-left: auto; }
.new-tab { width: 56px; height: 56px; margin-left: 8px; background: #b9b9b9; border-radius: 8px 8px 0 0; display: flex; align-items: center; justify-content: center; padding-left: 1px; }
.jobs { height: 56px; margin-left: 24px; display: flex; padding-top: 8px; width: 120px; }
.jobs span { line-height: 30px; margin-left: 8px; }
.user { height: 56px; line-height: 46px; letter-spacing: .15px; }

/* toolbar */
.workspace { flex: 1; position: relative; display: flex; flex-direction: column; align-items: flex-start; padding: 8px 0; min-height: 0; }
.toolbar { width: 1934px; height: 120px; flex: none; display: flex; background: #f1f1f1; }
.model-menu { width: 247px; display: flex; align-items: flex-start; padding-left: 8px; background: linear-gradient(#c8c8c8, #c8c8c8) right 0 top 5px / 2px 109px no-repeat; }
.grip { width: 10px; height: 46px; margin-top: 36px; border: solid #b5b5b5; border-width: 0 2px; }
.model-menu b { width: 82px; margin-left: 70px; line-height: 30px; margin-top: 45px; letter-spacing: .7px; }
.model-menu .tri { margin: 56px 0 0 10px; }
.group { padding: 4px 2px 0 0; background: linear-gradient(#c8c8c8, #c8c8c8) right 0 top 9px / 2px 101px no-repeat; }
.icons { display: flex; justify-content: center; gap: 10px; }
.icons svg { width: 76px; height: 76px; }
.icons .active { background: #0a95d9; }
.label { display: flex; align-items: center; line-height: 30px; margin-top: 9px; }
.label span { white-space: nowrap; }
.label .tri { margin-left: 6px; }
.g-sketch { width: 272px; } .g-sketch .label { padding-left: 79px; } .g-sketch span { width: 82px; }
.g-create { width: 184px; } .g-create .label { padding-left: 35px; } .g-create span { width: 82px; letter-spacing: 1.1px; }
.g-modify { width: 148px; } .g-modify .label { padding-left: 22px; } .g-modify span { width: 83px; }
.g-assemble { width: 184px; } .g-assemble .label { padding-left: 27px; } .g-assemble span { width: 106px; letter-spacing: -.1px; }
.g-construct { width: 198px; } .g-construct .label { padding-left: 22px; } .g-construct span { width: 132px; letter-spacing: .35px; }
.g-inspect { width: 148px; } .g-inspect .label { padding-left: 22px; } .g-inspect span { width: 87px; letter-spacing: .15px; }
.g-insert { width: 138px; } .g-insert .label { padding-left: 21px; } .g-insert span { width: 74px; letter-spacing: .1px; }
.g-make { width: 118px; } .g-make .label { padding-left: 21px; } .g-make span { width: 60px; }
.g-addins { width: 158px; } .g-addins .label { padding-left: 22px; } .g-addins span { width: 95px; }
.g-select { width: 139px; background: none; padding-right: 1px; } .g-select .label { padding-left: 22px; } .g-select span { width: 77px; letter-spacing: .4px; }

/* panels */
.panel { width: 595px; height: 50px; flex: none; display: flex; align-items: center; background: #f1f1f1; border: solid #c8c8c8; border-width: 1px 2px 2px 0; }
.panel h2 { margin: 0; font: inherit; color: #606060; line-height: 44px; height: 46px; }
.toggle { margin-left: auto; }
.pgrip { width: 6px; height: 22px; margin: 0 1px 0 15px; background: linear-gradient(#888, #888) 0 0 / 2px 22px no-repeat, linear-gradient(#888, #888) 4px 4px / 2px 14px no-repeat; }
.browser { margin-top: 8px; }
.collapse { margin-left: 6px; }
.browser h2 { margin-left: 20px; letter-spacing: -.4px; }

/* tree */
.tree { list-style: none; margin: 10px 0 0; padding: 0; display: flex; flex-direction: column; gap: 8px; }
.tree li { display: flex; align-items: center; height: 40px; padding-left: 69px; }
.tree .root { padding-left: 32px; }
.arrow { width: 14px; height: 20px; margin-right: 21px; }
.open { margin-right: 20px; }
.node { height: 40px; background: #f1f1f1; display: flex; align-items: center; padding-left: 6px; line-height: 38px; white-space: nowrap; }
.node > svg + span { margin-left: 28px; height: 40px; }
.bulb { width: 20px; height: 32px; margin: 0 24px 0 6px; }
.root .node { width: 280px; padding-left: 6px; }
.root .bulb { margin-right: 18px; }
.selected { width: 180px; height: 32px; background: #989898; color: #fff; display: flex; align-items: center; padding-left: 6px; }
.selected b { margin-left: 30px; line-height: 30px; height: 32px; letter-spacing: .6px; }
.check { margin-left: 6px; }
.n1 { width: 284px; letter-spacing: .22px; } .n2 { width: 228px; letter-spacing: .1px; } .n3 { width: 198px; } .n4 { width: 206px; } .n5 { width: 230px; letter-spacing: .1px; } .n6 { width: 294px; letter-spacing: .5px; }

/* canvas overlays */
.model { position: absolute; left: 1090px; top: 432px; width: 500px; height: 550px; }
.viewcube { position: absolute; left: 2486px; top: 52px; width: 130px; height: 170px; }
.viewcube .axis-z { position: absolute; left: 2px; top: 1px; font: 700 30px/32px "Liberation Sans", sans-serif; color: #8d8df8; transform: scaleX(.9); }
.viewcube .axis-x { position: absolute; left: 14px; top: 131px; font: 31px/28px "Liberation Sans", sans-serif; color: #ff8484; -webkit-text-stroke: .6px #ff8484; transform: scaleX(.72); }
.face { position: absolute; left: 16px; top: 22px; width: 108px; height: 106px; background: #f0f0f0; border: 2px solid #a9a9a9; box-shadow: 0 0 14px rgba(0, 0, 0, .16); padding: 18px; }
.face-in { width: 66px; height: 66px; background: #e6e8ec; display: flex; align-items: center; justify-content: center; }
.face-in span { writing-mode: vertical-rl; font: 600 29px/32px "Noto Sans", sans-serif; color: #999da4; transform: scaleY(.84); }

/* bottom strip */
.bottom { margin-top: auto; display: flex; align-items: flex-end; }
.comments { border-top: 0; }
.comments h2 { margin-left: 46px; }
.navbar { width: 506px; height: 48px; margin-left: 487px; background: #f1f1f1; display: flex; align-items: center; padding-left: 2px; }
.navbar svg:not(.tri) { height: 48px; }
.navbar .tri { width: 18px; height: 11px; }
.navbar .n-gap { margin-left: 12px; }
.n-a { margin: 0 2px 0 6px; }
.n-b { margin: 0 16px 0 6px; }
.n-c { margin: 0 4px 0 2px; }
.n-d { margin: 0 4px 0 2px; }
.n-e { margin: 0 0 0 2px; }

/* timeline */
.timeline { height: 104px; flex: none; border-top: 2px solid #c8c8c8; display: flex; padding-top: 18px;
  background: linear-gradient(#606060, #606060) 0 98px / 100% 1px no-repeat, linear-gradient(#858785, #858785) 0 99px / 100% 3px no-repeat,
  linear-gradient(90deg, #f1f1f1 120px, rgba(241, 241, 241, 0) 230px, rgba(241, 241, 241, 0) 2330px, #f1f1f1 2440px),
  linear-gradient(#f1f1f1 15%, #e9e9e9 60%, #dfdfdf 96%); }
.history { margin-left: 40px; width: 484px; position: relative; padding-top: 12px; }
.features { display: flex; gap: 16px; }
.features svg { width: 32px; height: 32px; }
.rail { margin-top: 6px; }
.marker { position: absolute; left: 460px; top: 0; }
.dock { flex: none; }
```
